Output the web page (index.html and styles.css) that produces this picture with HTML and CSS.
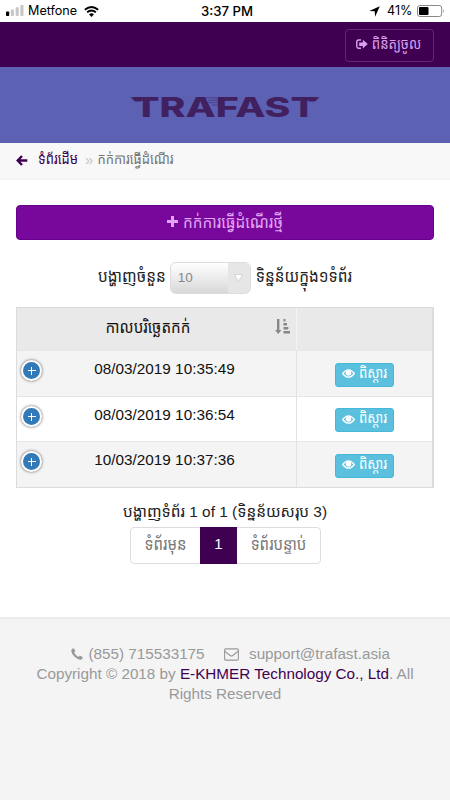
FILE: index.html
```html
<!DOCTYPE html>
<html lang="km">
<head>
<meta charset="utf-8">
<title>TRAFAST</title>
<link rel="stylesheet" href="styles.css">
</head>
<body>
<div class="status">
  <svg class="signal" width="18" height="12" viewBox="0 0 18 12"><rect x="0" y="6.5" width="3.2" height="4.5" rx=".7" fill="#000"/><g fill="#c8c8c8"><rect x="4.8" y="4.5" width="3.2" height="6.5" rx=".7"/><rect x="9.6" y="2.3" width="3.2" height="8.7" rx=".7"/><rect x="14.3" y="0" width="3.2" height="11" rx=".7"/></g></svg>
  <span class="carrier">Metfone</span>
  <svg class="wifi" width="15" height="11" viewBox="0 0 15 11"><path d="M.8 3.8Q7.5-1.7 14.2 3.8M3.1 6.3Q7.5 2.7 11.9 6.3" fill="none" stroke="#000" stroke-width="1.8"/><path d="M5 8.3Q7.5 6.2 10 8.3L7.5 10.9z"/></svg>
  <span class="time">3:37 PM</span>
  <svg class="locate" width="11" height="11" viewBox="0 0 11 11"><path d="M10.8.2L6.1 10.7 5.7 5.3.3 5z"/></svg>
  <span class="percent">41%</span>
  <svg class="battery" width="28" height="12" viewBox="0 0 28 12"><rect x=".5" y=".5" width="24.2" height="11" rx="2.5" fill="none" stroke="#888"/><rect x="2" y="2" width="9.5" height="8" rx="1"/><path d="M26 4Q27.6 6 26 8z" fill="#888"/></svg>
</div>
<header class="topbar">
  <a class="login"><svg width="12" height="11" viewBox="0 0 12 11"><path d="M5 1H2.5Q.8 1 .8 2.8V7.5Q.8 9.2 2.5 9.2H5" fill="none" stroke="currentColor" stroke-width="1.4"/><path d="M3.2 3.4H6.8V.8L11.8 5.1 6.8 9.6V6.9H3.2z" fill="currentColor"/></svg><span class="kh">ពិនិត្យចូល</span></a>
</header>
<div class="banner">
  <svg width="210" height="44" viewBox="-9 -9 210 44">
    <text class="logo" x="4" y="22.7" textLength="184" lengthAdjust="spacingAndGlyphs">TRAFAST</text>
    <path class="wing" d="M1.5 3.2H12V7.4H6zM180 3.2H190.5L186 7.4H180z"/>
    <path class="speed" d="M74 3.8H97M79 6.2H97M77 8.6H95M83 11H95"/>
  </svg>
</div>
<nav class="crumbs">
  <svg width="12" height="11" viewBox="0 0 12 11"><path d="M6 1L1.7 5.5 6 10M2 5.5H11.3" fill="none" stroke="currentColor" stroke-width="2.4"/></svg>
  <a class="kh home">ទំព័រដើម</a><span class="sep">»</span><span class="kh here">កក់ការធ្វើដំណើរ</span>
</nav>
<main>
  <a class="book"><svg width="11" height="11" viewBox="0 0 11 11"><path d="M5.5 0V11M0 5.5H11" stroke="currentColor" stroke-width="3"/></svg><span class="kh">កក់ការធ្វើដំណើរថ្មី</span></a>
  <div class="length"><span class="kh show">បង្ហាញចំនួន</span>
    <span class="select"><span>10</span><i><svg width="9" height="8" viewBox="0 0 9 8"><path d="M.5.5H8.5L4.5 7.5z" fill="#fff" stroke="#c4c4c4" stroke-width=".6"/></svg></i></span>
    <span class="kh per">ទិន្នន័យក្នុង១ទំព័រ</span></div>
  <div class="table">
    <div class="row head"><div class="date"><span class="kh">កាលបរិច្ឆេតកក់</span>
      <svg class="sort" width="15" height="15" viewBox="0 0 15 15" fill="#888"><path d="M2 0H4.4V11H6.5L3.2 15 0 11H2zM8.5 0H10.5V2.5H8.5zM8.5 4H12V6.5H8.5zM8.5 8H13.3V10.5H8.5zM8.5 12H15V14.5H8.5z"/></svg></div><div class="act"></div></div>
    <div class="row odd"><div class="date"><b class="plus"></b><span>08/03/2019 10:35:49</span></div><div class="act"><a class="view"><svg class="eye" viewBox="0 0 13 9"><path d="M.6 4.5Q6.5-2.8 12.4 4.5 6.5 11.8.6 4.5z" fill="none" stroke="#fff" stroke-width="1.2"/><circle cx="6.5" cy="4" r="2.8" fill="#fff"/></svg><span class="kh">ពិស្តារ</span></a></div></div>
    <div class="row even"><div class="date"><b class="plus"></b><span>08/03/2019 10:36:54</span></div><div class="act"><a class="view"><svg class="eye" viewBox="0 0 13 9"><path d="M.6 4.5Q6.5-2.8 12.4 4.5 6.5 11.8.6 4.5z" fill="none" stroke="#fff" stroke-width="1.2"/><circle cx="6.5" cy="4" r="2.8" fill="#fff"/></svg><span class="kh">ពិស្តារ</span></a></div></div>
    <div class="row odd"><div class="date"><b class="plus"></b><span>10/03/2019 10:37:36</span></div><div class="act"><a class="view"><svg class="eye" viewBox="0 0 13 9"><path d="M.6 4.5Q6.5-2.8 12.4 4.5 6.5 11.8.6 4.5z" fill="none" stroke="#fff" stroke-width="1.2"/><circle cx="6.5" cy="4" r="2.8" fill="#fff"/></svg><span class="kh">ពិស្តារ</span></a></div></div>
  </div>
  <div class="info">បង្ហាញទំព័រ 1 of 1 (ទិន្នន័យសរុប 3)</div>
  <div class="pager"><a class="prev kh">ទំព័រមុន</a><a class="current">1</a><a class="next kh">ទំព័របន្ទាប់</a></div>
</main>
<footer>
  <div class="contact"><svg width="12" height="12" viewBox="0 0 12 12"><path d="M.4 2.1Q1 .3 2.8.3L4.4 3.3 3.1 4.6Q4.6 7.5 7.4 8.9L8.8 7.5 11.8 9.2Q11.7 11.2 9.7 11.7 6.9 12 3.6 8.8-.3 5 .4 2.1z" fill="currentColor"/></svg><span class="phone">(855) 715533175</span><svg width="15" height="13" viewBox="0 0 15 13"><rect x=".6" y=".9" width="13.8" height="11.2" rx="1.2" fill="none" stroke="currentColor" stroke-width="1.1"/><path d="M.8 3.2L6.2 7.5Q7.5 8.5 8.8 7.5L14.2 3.2" fill="none" stroke="currentColor" stroke-width="1.1"/></svg><span class="mail">support@trafast.asia</span></div>
  <div class="copy">Copyright © 2018 by <a>E-KHMER Technology Co., Ltd</a>. All</div>
  <div class="rights">Rights Reserved</div>
</footer>
</body>
</html>
```
FILE: styles.css
```css
* { box-sizing: border-box; }
body { margin: 0; width: 450px; height: 800px; overflow: hidden; display: flex; flex-direction: column; background: #fff; color: #222; font: 15px/20px "Liberation Sans", "Noto Sans Khmer", "Khmer OS", sans-serif; white-space: nowrap; }
svg { flex: none; }
.kh { font-size: 15.4px; transform: scaleY(1.12); }
.status { height: 22px; flex: none; display: flex; align-items: center; padding-left: 6px; color: #000; font-family: Inter, sans-serif; font-size: 12.6px; }
.carrier { width: 50px; margin-left: 4px; }
.wifi { margin-left: 6px; }
.time { width: 54px; margin-left: 102px; font-size: 13.2px; font-weight: 500; }
.locate { margin-left: 114px; }
.percent { width: 26px; margin-left: 7px; }
.battery { margin-left: 4px; }
.topbar { height: 45px; flex: none; background: #3f0052; display: flex; justify-content: flex-end; padding: 7px 16px 0 0; }
.login { width: 89px; height: 33px; border: 1px solid #5e2b72; border-radius: 4px; color: #d9a2ee; display: flex; align-items: center; justify-content: center; gap: 4px; padding: 0 2px 2px 0; }
.login .kh { font-size: 13.2px; }
.banner { height: 76px; flex: none; background: #5d61b3; display: flex; align-items: center; justify-content: center; padding-top: 3px; }
.logo { font: 800 27px Inter, sans-serif; fill: #41205f; }
.wing { fill: #41205f; }
.speed { stroke: #41205f; stroke-width: .8; fill: none; opacity: .7; }
.crumbs { height: 37px; flex: none; background: #f8f8f8; border-bottom: 1px solid #f4f4f4; display: flex; align-items: center; padding: 0 0 2px 16px; color: #3f0052; }
.home { margin-left: 10px; }
.crumbs .kh { font-size: 13px; }
.sep { margin: 0 4px 0 7px; color: #c4c4c4; }
.crumbs .here { color: #777; }
main { height: 437px; flex: none; padding: 25px 16px 0; display: flex; flex-direction: column; }
.book { height: 35px; flex: none; border: 1px solid #67008b; border-radius: 4px; background: #77089b; color: #e2a3f5; display: flex; align-items: center; justify-content: center; gap: 5px; padding-bottom: 2px; }
.length { height: 36px; flex: none; margin-top: 20px; display: flex; align-items: center; justify-content: center; gap: 5px; }
.length .kh { margin-top: -4px; }
.length .show { margin-right: -1px; }
.select { width: 81px; height: 32px; border: 1px solid #ddd; border-radius: 6px; overflow: hidden; display: flex; justify-content: space-between; align-items: center; padding-left: 7px; color: #888; font-size: 13.5px; background: linear-gradient(#fff, #d8d8d8); }
.select i { width: 22px; height: 100%; display: flex; align-items: center; justify-content: center; background: #e6e6e6; }
.table { width: 418px; flex: none; margin-top: 11px; border: 1px solid #dcdcdc; border-width: 1px 2px 1px 1px; }
.row { display: flex; height: 46px; }
.row.head { height: 42px; background: #e9e9e9; }
.row.even { height: 45px; }
.row + .row { border-top: 1px solid #e6e6e6; }
.odd { background: #f4f4f4; }
.date { width: 280px; position: relative; display: flex; justify-content: center; padding: 8px 0 0 16px; font-size: 15.3px; color: #111; border-right: 1px solid #e2e2e2; }
.head .date { padding: 9px 17px 0 0; border-color: #f4f4f4; }
.head .kh { height: 20px; font-size: 15.2px; }
.sort { position: absolute; left: 258px; top: 11px; }
.act { flex: 1; display: flex; align-items: center; justify-content: center; padding-top: 2px; }
.plus { position: absolute; left: 4px; top: 9px; width: 21px; height: 21px; border: 2.5px solid #fff; border-radius: 50%; background: linear-gradient(#fff, #fff) center/8px 1px no-repeat, linear-gradient(#fff, #fff) center/1px 8px no-repeat, #3279b7; box-shadow: 0 0 3px #555; }
.view { width: 59px; height: 24px; border: 1px solid #46b8da; border-radius: 3px; background: #5bc0de; color: #fff; display: flex; align-items: center; justify-content: center; gap: 4px; padding-bottom: 2px; }
.view .kh { font-size: 13.2px; }
.eye { width: 13px; height: 9px; }
.info { flex: none; height: 20px; margin-top: 14px; text-align: center; font-size: 15.4px; }
.pager { width: 191px; height: 37px; flex: none; margin: 5px 0 0 114px; display: flex; border: 1px solid #ddd; border-radius: 4px; line-height: 31px; text-align: center; color: #777; }
.pager .kh { height: 31px; font-size: 15px; }
.prev { width: 69px; }
.current { width: 37px; height: 37px; margin-top: -1px; background: #3f0052; color: #fff; line-height: 33px; }
.next { flex: 1; }
footer { flex: 1; background: #f4f4f4; border-top: 2px solid #ebebeb; padding-top: 25px; color: #999; text-align: center; font-size: 15.25px; }
.contact { display: flex; align-items: center; height: 20px; padding-left: 71px; }
.phone { width: 117px; margin: 0 19px 0 5px; }
.mail { margin-left: 10px; }
.copy a { color: #3f0052; }
```
